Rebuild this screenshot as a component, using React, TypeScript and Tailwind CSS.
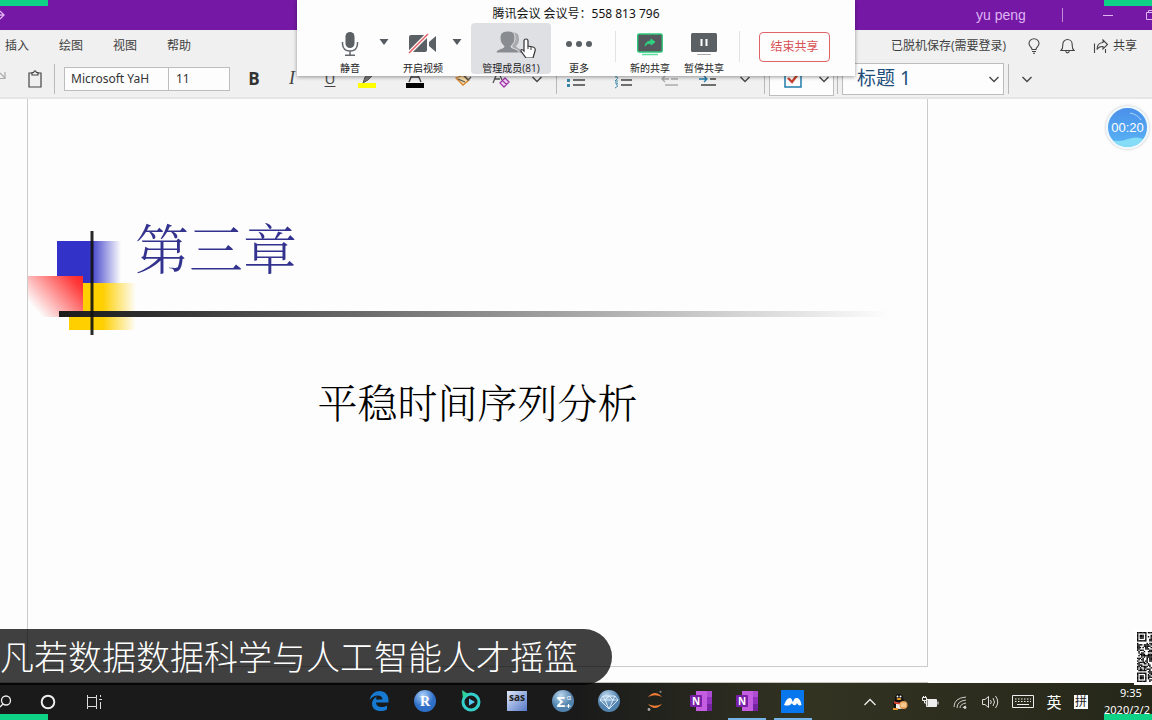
import React from "react";

const ui = "font-['Open_Sans','Noto_Sans_CJK_SC',sans-serif]";
const serif = "font-['Noto_Serif_CJK_SC','Noto_Sans_CJK_SC',serif]";

type Kids = { children: React.ReactNode };

function Chevron() {
  return (
    <svg width="12" height="12" viewBox="0 0 12 12" fill="none" stroke="#4a4a4a" strokeWidth="1.5">
      <path d="M1.5 4 6 8.500 10.500 4" />
    </svg>
  );
}

function Tool({ label, wide = "w-[38px]", children }: Kids & { label: string; wide?: string }) {
  return (
    <button type="button" aria-label={label} className={`flex h-6 shrink-0 items-center justify-center ${wide}`}>
      {children}
    </button>
  );
}

function Divider() {
  return <span className="h-[30px] w-px shrink-0 bg-[#b9b9b9]" />;
}

function TitleBar() {
  return (
    <header className="flex h-[30px] shrink-0 items-center justify-between bg-[#7518a6] text-[#dfb4f2]">
      <svg width="8" height="14" viewBox="0 0 8 14" fill="none" stroke="currentColor">
        <path d="M0 3 4 7 0 11M0 7H4" strokeWidth="1.300" />
      </svg>
      <div className="flex h-full items-center overflow-hidden">
        <span className="w-[52px] font-['Liberation_Sans',sans-serif] text-[14px] leading-4">yu peng</span>
        <span className="ml-[34px] h-[14px] w-px bg-[#c48bdc]" />
        <button type="button" aria-label="最小化" className="ml-[33px] flex w-6 justify-center">
          <svg width="10" height="10" viewBox="0 0 10 10" stroke="currentColor"><path d="M0 5.500H10" /></svg>
        </button>
        <button type="button" aria-label="还原" className="ml-[26px] w-[6px] overflow-hidden">
          <svg width="10" height="10" viewBox="0 0 10 10" fill="none" stroke="currentColor">
            <path d="M.5 2.500H7.500V9.500H.5ZM2.500 2.500V.5H9.500V7.500H7.500" />
          </svg>
        </button>
      </div>
    </header>
  );
}

function MenuRow() {
  return (
    <nav className="flex h-[30px] shrink-0 items-center justify-between pt-[2px] pr-[15px] pl-[5px] text-[12px] leading-4 text-[#3f3f3f]">
      <div className="flex gap-[30px]">
        {["插入", "绘图", "视图", "帮助"].map((t) => (
          <button type="button" key={t}>{t}</button>
        ))}
      </div>
      <div className="flex items-center">
        <span>已脱机保存(需要登录)</span>
        <button type="button" aria-label="操作说明" className="ml-5 flex w-4 justify-center">
          <svg width="14" height="16" viewBox="0 0 14 16" fill="none" stroke="#444" strokeWidth="1.100">
            <path d="M5 11.500C5 9 2 8.500 2 5.500A5 4.800 0 0 1 12 5.500C12 8.500 9 9 9 11.500ZM5 13.500H9M6 15.300H8" />
          </svg>
        </button>
        <button type="button" aria-label="通知" className="ml-[18px] flex w-4 justify-center">
          <svg width="15" height="16" viewBox="0 0 15 16" fill="none" stroke="#444" strokeWidth="1.100">
            <path d="M1 12.500C3 11 2.800 9 2.800 6.500 2.800 3.500 5 1.500 7.500 1.500S12.200 3.500 12.200 6.500C12.200 9 12 11 14 12.500ZM5.800 13C6 15.500 9 15.500 9.200 13" />
          </svg>
        </button>
        <button type="button" className="ml-[17px] flex items-center gap-1">
          <svg width="16" height="16" viewBox="0 0 16 16" fill="none" stroke="#444" strokeWidth="1.100">
            <path d="M1.500 5.500V15M12.500 11V15M10 2 14.500 6.500 10 11V8.500C7 8.200 5 9.500 4 11.500 4 7.500 6 4.800 10 4.500Z" />
          </svg>
          共享
        </button>
      </div>
    </nav>
  );
}

function Toolbar() {
  return (
    <div className="flex h-[39px] shrink-0 items-center border-b-2 border-[#e6e6e6]">
      <svg width="6" height="12" viewBox="0 0 6 12" fill="none" stroke="#aaa" strokeWidth="1.200" className="-mt-2 shrink-0">
        <path d="M0 4 5 9M5 3V9.500H0" />
      </svg>
      <Tool label="粘贴" wide="ml-[19px] w-5">
        <svg width="14" height="18" viewBox="0 0 14 18" fill="none" stroke="#444" strokeWidth="1.200">
          <path d="M4 3H1V17H13V3H10M4 5V2.500H5.500Q7-.8 8.500 2.500H10V5Z" />
        </svg>
      </Tool>
      <span className="ml-[9px]" /><Divider />
      <input aria-label="字体" defaultValue="Microsoft YaH" className="ml-[9px] h-6 w-[105px] shrink-0 border border-[#bdbdbd] bg-[#fdfdfd] pl-[6px] font-['Noto_Sans',sans-serif] text-[12px] text-[#333]" />
      <input aria-label="字号" defaultValue="11" className="h-6 w-[61px] shrink-0 border border-l-0 border-[#bdbdbd] bg-[#fdfdfd] pl-[7px] font-['Noto_Sans',sans-serif] text-[12px] text-[#333]" />
      <span className="w-[5px] shrink-0" />
      <Tool label="加粗"><span className="text-[17px] font-bold text-[#333]">B</span></Tool>
      <Tool label="倾斜"><span className="font-['Liberation_Serif',serif] text-[18px] text-[#444] italic">I</span></Tool>
      <Tool label="下划线"><span className="text-[15px] text-[#444] underline underline-offset-2">U</span></Tool>
      <Tool label="突出显示">
        <svg width="20" height="22" viewBox="0 0 20 22">
          <path d="M5 15 7 9 13 3 16 6 10 12 5 15Z" fill="#777" stroke="#555" />
          <path d="M0 15H18V20H0Z" fill="#ff0" />
        </svg>
      </Tool>
      <Tool label="字体颜色" wide="ml-[10px] w-[38px]">
        <svg width="20" height="22" viewBox="0 0 20 22" fill="none" stroke="#444" strokeWidth="1.400">
          <path d="M3 14 9 0 15 14M5.200 9H12.800" /><path d="M0 15H18V20H0Z" fill="#000" stroke="none" />
        </svg>
      </Tool>
      <Tool label="格式刷" wide="ml-[9px] w-[38px]">
        <svg width="18" height="18" viewBox="0 0 18 18" fill="none" strokeWidth="1.300">
          <path d="M2 8 9 15 15 10 10 5Z" fill="#f8dca8" stroke="#d8862c" /><path d="M9 5 14 10 17 7M4 9 11 12" stroke="#555" />
        </svg>
      </Tool>
      <Tool label="清除格式">
        <svg width="20" height="20" viewBox="0 0 20 20" fill="none" strokeWidth="1.300">
          <path d="M2 14 7 2 11 11M4 10H9" stroke="#555" /><path d="M9 14 14 9 18 13 13 18Z M11.500 11.500 15.500 15.500" stroke="#a03aaa" fill="#f2d8f4" />
        </svg>
      </Tool>
      <Tool label="更多字体选项" wide="ml-[3px] w-7"><Chevron /></Tool>
      <span className="ml-[5px]" /><Divider />
      <Tool label="项目符号" wide="w-[38px]">
        <svg width="20" height="18" viewBox="0 0 20 18" strokeWidth="1.300">
          <path d="M7 4H19M7 10H19M7 15H19" stroke="#444" /><path d="M1 3H4V6H1ZM1 9H4V12H1ZM1 14H4V17H1Z" fill="#3685a5" />
        </svg>
      </Tool>
      <Tool label="编号" wide="ml-[9px] w-[38px]">
        <svg width="20" height="20" viewBox="0 0 20 20" strokeWidth="1.300">
          <path d="M8 5H19M8 11H19M8 16H19" stroke="#444" />
          <path d="M3 2V5M2 8Q5 7 4.500 9.500L2 12H5M2 14H4.500L3.500 16Q6 17 2 19" stroke="#3685a5" fill="none" strokeWidth="1" />
        </svg>
      </Tool>
      <Tool label="减少缩进" wide="ml-[9px] w-[38px]">
        <svg width="20" height="18" viewBox="0 0 20 18" fill="none" stroke="#aaa" strokeWidth="1.300">
          <path d="M2 3H18M11 9H18M5 15H18M9 9H2M5 6 2 9 5 12" />
        </svg>
      </Tool>
      <Tool label="增加缩进">
        <svg width="20" height="18" viewBox="0 0 20 18" fill="none" stroke="#444" strokeWidth="1.300">
          <path d="M2 3H18M12 9H18M3 15H18" /><path d="M1 9H9M6 6 9 9 6 12" stroke="#217bab" />
        </svg>
      </Tool>
      <Tool label="更多段落选项" wide="ml-1 w-7"><Chevron /></Tool>
      <span className="ml-[5px]" /><Divider />
      <div className="ml-1 flex h-[34px] w-[65px] shrink-0 items-center border border-[#bdbdbd] bg-[#fdfdfd]">
        <Tool label="待办事项标记" wide="ml-[14px] w-[18px]">
          <svg width="18" height="18" viewBox="0 0 18 18" fill="none">
            <path d="M1 1H17V17H1Z" stroke="#217bab" strokeWidth="1.500" /><path d="M4 8 8 12 14 4" stroke="#c7402d" strokeWidth="2.400" />
          </svg>
        </Tool>
        <Tool label="更多标记" wide="ml-2 w-7"><Chevron /></Tool>
      </div>
      <span className="ml-[3px]" /><Divider />
      <div className="relative ml-[4px] h-8 w-[162px] shrink-0">
        <select aria-label="样式" className="h-full w-full appearance-none border border-[#bdbdbd] bg-[#fdfdfd] pl-[14px] font-['Noto_Sans','Noto_Sans_CJK_SC',sans-serif] text-[19px] text-[#1e4e79]">
          <option>标题 1</option>
        </select>
        <span className="pointer-events-none absolute top-[10px] right-1"><Chevron /></span>
      </div>
      <span className="ml-1" /><Divider />
      <Tool label="更多命令" wide="ml-1 w-7"><Chevron /></Tool>
    </div>
  );
}

function SlideOrnament() {
  return (
    <svg width="870" height="106" viewBox="28 231 870 106" className="absolute top-[132px] left-0 max-w-full" preserveAspectRatio="xMinYMin slice">
      <defs>
        <linearGradient id="blue"><stop offset=".5" stopColor="#3232c8" /><stop offset="1" stopColor="#3232c8" stopOpacity="0" /></linearGradient>
        <linearGradient id="gold"><stop offset=".5" stopColor="#ffcf00" /><stop offset="1" stopColor="#ffcf00" stopOpacity="0" /></linearGradient>
        <linearGradient id="red" gradientUnits="userSpaceOnUse" x1="83" y1="280" x2="42" y2="317"><stop offset="0" stopColor="#ff2a2a" /><stop offset=".12" stopColor="#ff3838" /><stop offset="1" stopColor="#fdfdfd" /></linearGradient>
        <linearGradient id="rule"><stop offset="0" stopColor="#1c1c1c" /><stop offset=".1" stopColor="#2c2c2c" /><stop offset="1" stopColor="#333" stopOpacity="0" /></linearGradient>
      </defs>
      <path d="M57 241H121V283H57Z" fill="url(#blue)" />
      <path d="M69 283H136V330H69Z" fill="url(#gold)" />
      <path d="M28 276H83V317H28Z" fill="url(#red)" />
      <path d="M59 311H890V317H59Z" fill="url(#rule)" />
      <path d="M90.500 231H93.500V335H90.500Z" fill="#111" opacity=".9" />
    </svg>
  );
}

function Slide() {
  return (
    <main className="flex min-h-0 flex-1 flex-col bg-[#fdfdfd]">
      <section className={`relative mr-[224px] ml-[27px] flex-1 border border-t-0 border-[#cbcbcb] font-light ${serif}`}>
        <SlideOrnament />
        <h1 className="relative pt-[118px] pl-[107px] text-[54px] leading-[60px] text-[#33338f]">第三章</h1>
        <p className="mt-[94px] text-center text-[40px] leading-[60px] text-black">平稳时间序列分析</p>
      </section>
      <div className="mr-[224px] h-4 border-b border-[#c4c4bc]" />
    </main>
  );
}

function MeetingItem({ label, wide, active = false, children }: Kids & { label: string; wide: string; active?: boolean }) {
  return (
    <button type="button" className={`flex h-[51px] shrink-0 flex-col items-center justify-between rounded-[4px] pt-[7px] ${wide} ${active ? "bg-[#dfe0e4]" : ""}`}>
      <span className="flex h-7 items-center">{children}</span>
      <span className="text-[10px] leading-3 whitespace-nowrap text-[#222]">{label}</span>
    </button>
  );
}

function Caret({ label }: { label: string }) {
  return (
    <button type="button" aria-label={label} className="-ml-px flex h-[37px] w-[10px] items-center">
      <svg width="10" height="6" viewBox="0 0 10 6"><path d="M.5 0H9.500L5 6Z" fill="#555a60" /></svg>
    </button>
  );
}

function MeetingBar() {
  return (
    <aside className="absolute top-0 left-1/2 flex h-[76px] w-[558px] -translate-x-1/2 flex-col bg-[#fdfdfd] shadow-[0_1px_4px_rgba(0,0,0,0.4)]">
      <p className="h-[23px] pt-[6px] text-center font-['Noto_Sans','Noto_Sans_CJK_SC',sans-serif] text-[12px] leading-4 text-[#111]">腾讯会议 会议号：558 813 796</p>
      <div className="flex pl-[23px]">
        <MeetingItem label="静音" wide="w-[60px]">
          <svg width="18" height="26" viewBox="0 0 18 26" fill="none" stroke="#62676b" strokeWidth="1.500">
            <rect x="4.500" y="1" width="9" height="16" rx="4.500" fill="#5b6065" stroke="none" />
            <path d="M1.500 11V13Q2 20 9 20T16.500 13V11M9 20V24M4 24.300H14" />
          </svg>
        </MeetingItem>
        <Caret label="音频选项" />
        <span className="w-1" />
        <MeetingItem label="开启视频" wide="w-[60px]">
          <svg width="30" height="22" viewBox="0 0 30 22">
            <path d="M1 4Q1 2 3 2H17Q19 2 19 4V17Q19 19 17 19H3Q1 19 1 17ZM21 9 28 3V19L21 13Z" fill="#5b6065" />
            <path d="M1 20 20 1" stroke="#fff" strokeWidth="4" /><path d="M1 20 20 1" stroke="#e46468" strokeWidth="1.600" />
          </svg>
        </MeetingItem>
        <Caret label="视频选项" />
        <span className="w-[9px]" />
        <MeetingItem label="管理成员(81)" wide="w-20" active>
          <svg width="50" height="28" viewBox="-2 0 50 28" className="ml-3">
            <path d="M17 3Q25 1 25 9 25 14 22 16 23 18 28 20V23H19Z" fill="#a8abae" />
            <path d="M2 23C2 19 8 19 10 17 10 15 6 14 6 8 6 3 9 1 14 1S21 3 21 8C21 14 17 15 17 17 19 19 25 19 25 23Z" fill="#898d91" stroke="#dfe0e4" />
            <path d="M30 21V11Q30 9 32 9T34 11V16L39 17Q42 18 41 21L39 28H32L27 21Q27 18 30 21Z" fill="#fff" stroke="#333" strokeWidth="1.200" />
            <path d="M34 16V19M37 17V20" stroke="#333" />
          </svg>
        </MeetingItem>
        <MeetingItem label="更多" wide="w-14">
          <svg width="28" height="8" viewBox="0 0 28 8" fill="#5b6065"><circle cx="4" cy="4" r="3" /><circle cx="14" cy="4" r="3" /><circle cx="24" cy="4" r="3" /></svg>
        </MeetingItem>
        <span className="mt-2 ml-2 h-[31px] w-px bg-[#e3e3e3]" />
        <MeetingItem label="新的共享" wide="ml-[7px] w-[54px]">
          <svg width="28" height="24" viewBox="0 0 28 24">
            <rect x="1.700" y="2" width="24.500" height="18" rx="1.500" fill="#55595d" stroke="#2fc57a" strokeWidth="1.400" />
            <path d="M9 14Q10 9 15 9V7L19 10 15 13V11Q11 11 9 14Z" fill="#2fd07f" stroke="#2fd07f" /><path d="M6 22.500H22" stroke="#5ee0a0" strokeWidth="1.500" />
          </svg>
        </MeetingItem>
        <MeetingItem label="暂停共享" wide="w-[54px]">
          <svg width="28" height="24" viewBox="0 0 28 24">
            <rect x="1" y="1" width="26" height="19" rx="1.500" fill="#5b6065" /><path d="M11.500 7V14M16.500 7V14" stroke="#fff" strokeWidth="2" /><path d="M7 22.500H21" stroke="#aaa" />
          </svg>
        </MeetingItem>
        <span className="mt-2 ml-2 h-[31px] w-px bg-[#e3e3e3]" />
        <button type="button" className="mt-[9px] ml-[19px] h-[30px] w-[71px] rounded-[4px] border border-[#dd6568] text-[12px] text-[#d85256]">结束共享</button>
      </div>
    </aside>
  );
}

function Timer() {
  return (
    <div className="absolute top-[106px] right-[3px] flex size-[43px] items-center justify-center overflow-hidden rounded-full border-2 border-[#eef8ff] bg-linear-to-b from-[#4a90ea] to-[#5ab4f4] shadow-[0_0_3px_#bbb]">
      <svg className="absolute inset-0" width="39" height="39" viewBox="0 0 39 39" fill="none">
        <path d="M0 31Q10 35 20 31T39 33V39H0Z" fill="#85dcf6" /><path d="M22 5Q29 6 33 12" stroke="#a9d6ff" />
      </svg>
      <span className="relative font-['Liberation_Sans',sans-serif] text-[13px] leading-4 text-white">00:20</span>
    </div>
  );
}

const qrSize = 37;
const qrRows = Array.from({ length: qrSize }, (_, y) =>
  Array.from({ length: 11 }, (_, x) => {
    const band = y < 7 ? y : y > qrSize - 8 ? y - (qrSize - 7) : -1;
    if (band >= 0 && x < 7) return x === 0 || x === 6 || band === 0 || band === 6 || (x > 1 && x < 5 && band > 1 && band < 5);
    if ((y === 7 || y === qrSize - 8) && x < 8) return false;
    if (band >= 0 && x === 7) return false;
    const h = Math.sin(x * 127.1 + y * 311.7) * 43758.5453;
    return h - Math.floor(h) < 0.52;
  }),
);

function QrCode() {
  return (
    <div className="absolute right-0 bottom-[35px] w-[18px] overflow-hidden bg-white pt-[3px] pb-[3px] pl-[3px]">
      <svg width="15" height="50" viewBox="0 0 11.100 37">
        {qrRows.map((row, y) => row.map((on, x) => on && <rect key={`${x}-${y}`} x={x} y={y} width="1.050" height="1.050" />))}
      </svg>
    </div>
  );
}

function OneNote() {
  return (
    <svg width="24" height="22" viewBox="0 0 24 22">
      <rect x="7" y="1" width="16" height="20" fill="#c45ddf" /><path d="M18 1H23V7H18Z" fill="#ad4cd0" /><path d="M18 7H23V14H18Z" fill="#9332bf" /><path d="M18 14H23V21H18Z" fill="#7424a0" />
      <rect x="1" y="5" width="12" height="12" rx="1" fill="#7a1fa8" />
      <text x="7" y="14.500" textAnchor="middle" fontSize="10" fontWeight="700" fill="#fff">N</text>
    </svg>
  );
}

function Ball({ id, children }: Kids & { id: string }) {
  return (
    <svg width="24" height="24" viewBox="0 0 24 24">
      <defs><radialGradient id={id} cx=".4" cy=".25"><stop stopColor={id === "rball" ? "#b0d3fa" : "#bbd6ec"} /><stop offset="1" stopColor={id === "rball" ? "#2e6fc8" : "#5283ae"} /></radialGradient></defs>
      <circle cx="12" cy="12" r="11" fill={`url(#${id})`} />
      {children}
    </svg>
  );
}

const apps: { name: string; active?: boolean; icon: React.ReactNode }[] = [
  { name: "Edge", icon: (
    <svg width="22" height="22" viewBox="0 0 22 22"><path d="M1.500 10C3 4 7 1 11.500 1 17 1 20.500 5 20.500 10V12.500H8C8.500 18 15 18 19 15.500V19.500C13 22.500 4 21.500 4 13.500 4 10.500 6 8 9 6.500 8 8 8 9 8 9.500H14.500C14.500 3.500 5 4.500 1.500 10Z" fill="#1679d2" /></svg>
  ) },
  { name: "R", icon: <Ball id="rball"><text x="12" y="17" textAnchor="middle" fontSize="14" fontWeight="700" fontFamily="Liberation Serif" fill="#fff">R</text></Ball> },
  { name: "播放器", icon: (
    <svg width="24" height="24" viewBox="0 0 24 24" fill="none"><circle cx="12" cy="13" r="8" stroke="#35d0cb" strokeWidth="3" /><path d="M3 1 9 5 4 10Z" fill="#2fd39a" /><path d="M10 9.500 16 13 10 16.500Z" fill="#53c9f3" /></svg>
  ) },
  { name: "SAS", icon: (
    <svg width="22" height="22" viewBox="0 0 22 22"><defs><linearGradient id="sas" x2="1" y2="1"><stop stopColor="#dfe8fa" /><stop offset="1" stopColor="#5578c7" /></linearGradient></defs><path d="M1 1H21V21H1Z" fill="url(#sas)" /><text x="11" y="10.500" textAnchor="middle" fontSize="10" fontWeight="700" fill="#222">sas</text></svg>
  ) },
  { name: "SPSS", icon: <Ball id="sigma"><text x="10" y="17.500" textAnchor="middle" fontSize="15" fontWeight="700" fill="#fff">Σ</text><text x="18" y="11" textAnchor="middle" fontSize="7" fill="#fff">α</text><path d="M15.500 17H19.500M17.500 15V19" stroke="#fff" /></Ball> },
  { name: "宝石", icon: <Ball id="gem"><path d="M6 7H18L21 11 12 20 3 11ZM3 11H21M8 11 12 20 16 11M6 7 8 11 12 7 16 11 18 7" fill="none" stroke="#e4f3ff" strokeWidth=".9" /></Ball> },
  { name: "Jupyter", icon: (
    <svg width="20" height="22" viewBox="0 0 20 22"><path d="M3 7Q10-1 17 7 10 3.500 3 7ZM3 14Q10 22 17 14 10 17.500 3 14Z" fill="#ef7d36" /><circle cx="15.500" cy="1.800" r="1.100" fill="#888" /><circle cx="4" cy="19.500" r="1.400" fill="#aaa" /></svg>
  ) },
  { name: "OneNote", icon: <OneNote /> },
  { name: "OneNote 笔记", active: true, icon: <OneNote /> },
  { name: "腾讯会议", active: true, icon: (
    <svg width="24" height="24" viewBox="0 0 24 24"><path d="M0 1H23V24H0Z" fill="#0877ed" /><path d="M3 16C5 12 6 9 9 9 11 9 11 12 12 13 13 10 14 8.500 16 9 19 9.500 20 13 20.500 16 18 17 17 16 16 14 15 17 12 17 11 14 9 17 6 17 3 16Z" fill="#fff" /></svg>
  ) },
];

function Tray({ label, wide = "w-[30px]", children }: Kids & { label: string; wide?: string }) {
  return <button type="button" aria-label={label} className={`flex shrink-0 items-center justify-center ${wide}`}>{children}</button>;
}

function Taskbar() {
  return (
    <footer className="flex h-[37px] shrink-0 items-stretch bg-linear-to-r from-[#1a1a1a] from-50% via-[#333322] via-70% to-[#252719] text-white">
      <button type="button" aria-label="搜索" className="flex w-[25px] items-center">
        <svg width="12" height="14" viewBox="0 0 12 14" fill="none" stroke="#eee" strokeWidth="1.300"><circle cx="6" cy="5.500" r="4.500" /><path d="M3 9 0 12" /></svg>
      </button>
      <Tray label="Cortana" wide="w-[46px]"><svg width="16" height="16" viewBox="0 0 16 16" fill="none" stroke="#eee" strokeWidth="2"><circle cx="8" cy="8" r="6.300" /></svg></Tray>
      <Tray label="任务视图" wide="w-[45px]">
        <svg width="16" height="16" viewBox="0 0 16 16" fill="none" stroke="#ddd"><path d="M1.500 1V3.500H10.500V1M1.500 15V12.500H10.500V15M1.500 3.500V12.500M10.500 3.500V12.500M14.500 1V3M14.500 8V15M13 5.500H16" /></svg>
      </Tray>
      <div className="ml-[240px] flex">
        {apps.map((a) => (
          <button type="button" key={a.name} aria-label={a.name} className="flex w-[46px] flex-col items-center">
            <span className="flex h-[35px] items-center">{a.icon}</span>
            {a.active && <span className="h-[2px] w-[38px] bg-[#76b3e6]" />}
          </button>
        ))}
      </div>
      <div className="ml-auto flex">
        <Tray label="显示隐藏的图标"><svg width="12" height="8" viewBox="0 0 12 8" fill="none" stroke="#eee" strokeWidth="1.300"><path d="M.5 7 6 1.500 11.500 7" /></svg></Tray>
        <Tray label="QQ">
          <svg width="18" height="18" viewBox="0 0 18 18"><path d="M2 10Q4 8 4 5 4 1 8 1T12 5Q13 9 15 11L12 16H4Z" fill="#111" /><path d="M5 9Q8 11 12 9V15Q8 17 5 15Z" fill="#eee" /><path d="M3 8Q8 11 13 8V10.500Q8 12 3 10.500Z" fill="#d9402c" /><ellipse cx="8" cy="6" rx="2.500" ry="1" fill="#ee9d2b" /><circle cx="6.500" cy="3.500" r="1" fill="#fff" /><circle cx="9.500" cy="3.500" r="1" fill="#fff" /><circle cx="12.500" cy="12" r="4" fill="#e9a25a" /><path d="M10 11H15M10 13H15" stroke="#fff0c8" /><path d="M2 16H7" stroke="#e5972b" strokeWidth="2" /></svg>
        </Tray>
        <Tray label="电池">
          <svg width="18" height="14" viewBox="0 0 18 14" fill="none" stroke="#eee"><path d="M5.500 4.500H15.500V11.500H5.500ZM17 6.500V9.500" /><path d="M7 5H15V11H7Z" fill="#eee" /><path d="M1.500 2.500H5.500V5.500H1.500ZM3.500 5.500V8H6M2.500 1V2M4.500 1V2" /></svg>
        </Tray>
        <Tray label="无线网络">
          <svg width="14" height="14" viewBox="0 0 14 14" fill="none" stroke="#ccc"><path d="M1 12Q1 3 13 2M4 13Q4 6 13 5M7 13Q7 9 13 8M10 13Q10 11.500 13 11" /><circle cx="12" cy="12.500" r="1" fill="#fff" /></svg>
        </Tray>
        <Tray label="音量">
          <svg width="17" height="14" viewBox="0 0 17 14" fill="none" stroke="#ddd"><path d="M.5 4.500H3L6.500 1.500V12.500L3 9.500H.5ZM8.500 5Q10 7 8.500 9M11 3Q14 7 11 11M13.500 1Q18 7 13.500 13" /></svg>
        </Tray>
        <Tray label="触摸键盘" wide="w-9">
          <svg width="22" height="13" viewBox="0 0 22 13" fill="none" stroke="#eee"><path d="M.5.5H21.500V12.500H.5ZM5 9.500H17" /><path d="M3 4H19M3 6.500H19" strokeDasharray="1.500 1.500" /></svg>
        </Tray>
        <Tray label="输入语言" wide="w-[26px]"><span className="text-[15px] leading-5">英</span></Tray>
        <Tray label="拼音输入法" wide="w-7"><span className="size-[14px] bg-white text-center text-[12px] leading-[14px] text-[#222]">拼</span></Tray>
        <div className="w-[57px] overflow-hidden pt-[1px] pl-[9px] font-['Noto_Sans',sans-serif] text-[11px] leading-[17px]">
          <div className="w-[54px] text-center">9:35</div>
          <div className="whitespace-nowrap">2020/2/2</div>
        </div>
      </div>
    </footer>
  );
}

export default function App() {
  return (
    <div className={`relative flex h-screen flex-col overflow-hidden bg-[#eff0ef] ${ui}`}>
      <TitleBar />
      <MenuRow />
      <Toolbar />
      <Slide />
      <Taskbar />
      <MeetingBar />
      <Timer />
      <QrCode />
      <div className="absolute bottom-[35px] left-0 h-14 rounded-r-[28px] bg-black/75 pr-[34px]">
        <p className="text-[34px] leading-[56px] font-light whitespace-nowrap text-white">凡若数据数据科学与人工智能人才摇篮</p>
      </div>
      <span className="absolute top-0 left-0 h-[6px] w-12 bg-[#0ed285]" />
      <span className="absolute top-0 right-0 h-[6px] w-12 bg-[#0ed285]" />
      <span className="absolute bottom-0 left-0 h-[6px] w-12 bg-[#0ed285]" />
      <span className="absolute right-0 bottom-0 h-[6px] w-12 bg-[#0ed285]" />
    </div>
  );
}
